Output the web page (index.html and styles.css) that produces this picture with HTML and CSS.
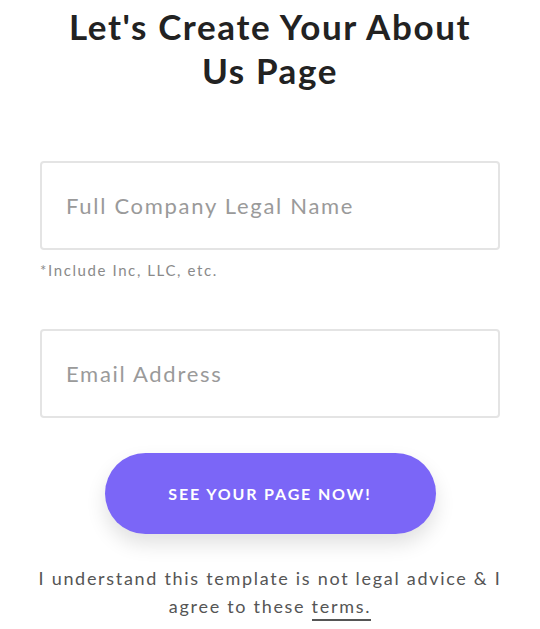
FILE: index.html
```html
<!DOCTYPE html>
<html>
<head>
<meta charset="utf-8">
<link rel="stylesheet" href="styles.css">
</head>
<body>
<main class="page">
  <h1 class="title">Let's Create Your About Us Page</h1>
  <form class="form">
    <div class="field">
      <input class="input" type="text" placeholder="Full Company Legal Name">
      <p class="hint">*Include Inc, LLC, etc.</p>
    </div>
    <div class="field field-email">
      <input class="input" type="email" placeholder="Email Address">
    </div>
    <button class="cta" type="button">SEE YOUR PAGE NOW!</button>
    <p class="legal">I understand this template is not legal advice &amp; I agree to these <a class="terms" href="#">terms.</a></p>
  </form>
</main>
</body>
</html>
```
FILE: styles.css
```css
* { box-sizing: border-box; }
html, body { margin: 0; background: #fff; }
body { font-family: "Lato", "Open Sans", sans-serif; color: #222; }
.page { width: 540px; padding: 0 40px; display: flex; flex-direction: column; align-items: center; }
.title {
  margin: 4px 0 0;
  font-size: 35px;
  line-height: 44px;
  font-weight: 700;
  letter-spacing: 1.6px;
  text-align: center;
  color: #222;
  width: 440px;
}
.form { width: 100%; display: flex; flex-direction: column; align-items: center; margin-top: 69px; }
.field { width: 100%; }
.field-email { margin-top: 49px; }
.input {
  display: block;
  width: 100%;
  height: 89px;
  border: 2px solid #e4e4e4;
  border-radius: 4px;
  padding: 0 24px;
  font-family: inherit;
  font-size: 22px;
  letter-spacing: 1.7px;
  color: #333;
  outline: none;
}
.input::placeholder { color: #9a9a9a; }
.hint { margin: 10px 0 0; font-size: 15px; letter-spacing: 1.6px; color: #8a8a8a; line-height: 20px; }
.cta {
  margin-top: 35px;
  width: 331px;
  height: 81px;
  border: none;
  border-radius: 41px;
  background: #7b66f7;
  color: #fff;
  font-family: inherit;
  font-weight: 700;
  font-size: 16px;
  letter-spacing: 1.85px;
  box-shadow: 0 10px 20px rgba(0,0,0,0.12);
}
.legal {
  margin: 30px 0 0;
  width: 472px;
  text-align: center;
  font-size: 18px;
  letter-spacing: 1.7px;
  line-height: 28px;
  color: #555;
}
.terms {
  display: inline-block;
  color: #555;
  text-decoration: none;
  line-height: 26px;
  border-bottom: 2px solid #555;
}
```
